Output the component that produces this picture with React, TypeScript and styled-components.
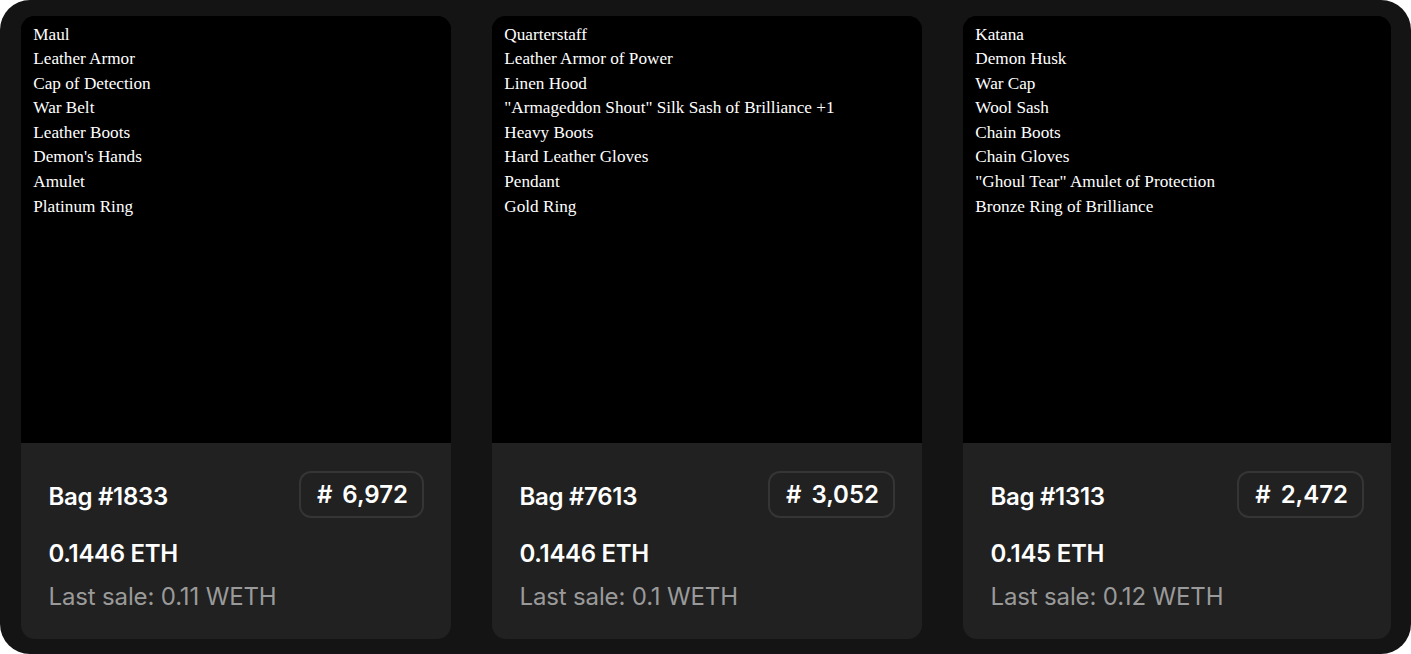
import React from "react";
import styled, { createGlobalStyle } from "styled-components";

const Global = createGlobalStyle`
  html, body { margin: 0; padding: 0; background: #ffffff; }
  body { font-family: Inter, "Noto Sans", sans-serif; }
`;

const Frame = styled.div`
  width: 1411px;
  height: 654px;
  box-sizing: border-box;
  background: #141414;
  border-radius: 30px;
  padding: 16px 20px 15px 21px;
  display: grid;
  grid-template-columns: 430px 430px 1fr;
  column-gap: 41px;
`;

const Card = styled.div`
  display: flex;
  flex-direction: column;
  border-radius: 14px;
  overflow: hidden;
  background: #212121;
  min-width: 0;
`;

const Art = styled.svg`
  display: block;
  width: 100%;
  height: 427px;
  flex: none;
  background: #000;
`;

const Info = styled.div`
  flex: 1;
  box-sizing: border-box;
  padding: 28px 27px 0 27.5px;
  display: flex;
  flex-direction: column;
`;

const TopRow = styled.div`
  display: flex;
  justify-content: space-between;
  align-items: center;
  height: 48px;
`;

const Title = styled.div`
  color: #ffffff;
  font-size: 24px;
  font-weight: 600;
  letter-spacing: -0.3px;
  margin-top: 3px;
`;

const Rank = styled.div`
  box-sizing: border-box;
  height: 47px;
  padding: 0 14px 0 16px;
  border: 2px solid #353535;
  border-radius: 12px;
  color: #ffffff;
  font-size: 24px;
  font-weight: 600;
  display: flex;
  align-items: center;
  gap: 10px;
  margin-top: -2px;
`;

const Price = styled.div`
  color: #ffffff;
  font-size: 24px;
  font-weight: 600;
  letter-spacing: -0.3px;
  margin-top: 20px;
`;

const LastSale = styled.div`
  color: #9a9a9a;
  font-size: 24px;
  font-weight: 400;
  letter-spacing: -0.15px;
  margin-top: 14px;
`;

type Bag = {
  id: number;
  rank: string;
  price: string;
  last: string;
  items: string[];
};

const bags: Bag[] = [
  {
    id: 1833,
    rank: "6,972",
    price: "0.1446 ETH",
    last: "0.11 WETH",
    items: [
      "Maul",
      "Leather Armor",
      "Cap of Detection",
      "War Belt",
      "Leather Boots",
      "Demon's Hands",
      "Amulet",
      "Platinum Ring",
    ],
  },
  {
    id: 7613,
    rank: "3,052",
    price: "0.1446 ETH",
    last: "0.1 WETH",
    items: [
      "Quarterstaff",
      "Leather Armor of Power",
      "Linen Hood",
      '"Armageddon Shout" Silk Sash of Brilliance +1',
      "Heavy Boots",
      "Hard Leather Gloves",
      "Pendant",
      "Gold Ring",
    ],
  },
  {
    id: 1313,
    rank: "2,472",
    price: "0.145 ETH",
    last: "0.12 WETH",
    items: [
      "Katana",
      "Demon Husk",
      "War Cap",
      "Wool Sash",
      "Chain Boots",
      "Chain Gloves",
      '"Ghoul Tear" Amulet of Protection',
      "Bronze Ring of Brilliance",
    ],
  },
];

const BagCard: React.FC<{ bag: Bag }> = ({ bag }) => (
  <Card>
    <Art viewBox="0 0.8 350 347.6" preserveAspectRatio="xMinYMin slice">
      <rect width="350" height="350" fill="#000" />
      {bag.items.map((it, i) => (
        <text
          key={i}
          x={10}
          y={20 + i * 20}
          fill="#ffffff"
          fontFamily='"Liberation Serif", "Times New Roman", serif'
          fontSize={14}
        >
          {it}
        </text>
      ))}
    </Art>
    <Info>
      <TopRow>
        <Title>Bag #{bag.id}</Title>
        <Rank>
          <span>#</span>
          <span>{bag.rank}</span>
        </Rank>
      </TopRow>
      <Price>{bag.price}</Price>
      <LastSale>Last sale: {bag.last}</LastSale>
    </Info>
  </Card>
);

export default function App() {
  return (
    <>
      <Global />
      <Frame>
        {bags.map((b) => (
          <BagCard key={b.id} bag={b} />
        ))}
      </Frame>
    </>
  );
}
